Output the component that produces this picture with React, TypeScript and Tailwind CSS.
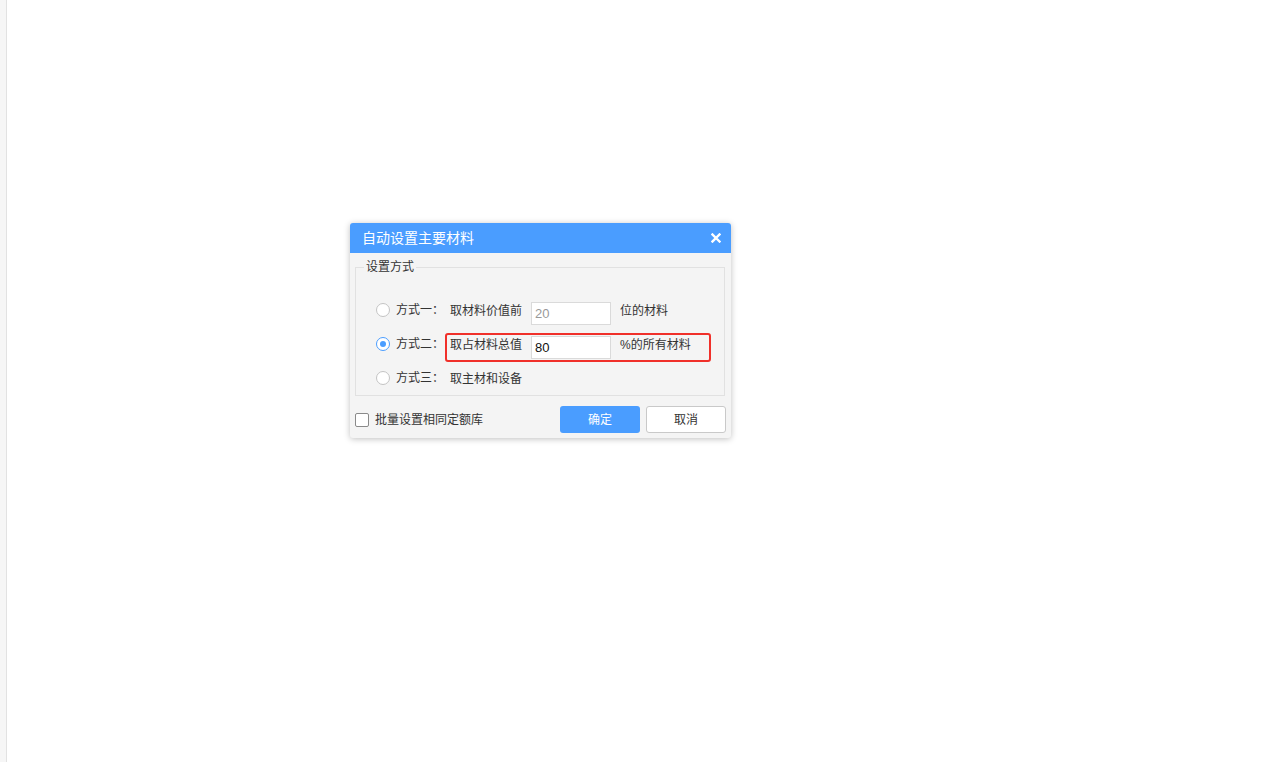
import { useState } from 'react';

const font = { fontFamily: '"Liberation Sans", "Noto Sans CJK SC", sans-serif' };

interface RowProps {
  label: string;
  checked: boolean;
  highlight?: boolean;
  onSelect: () => void;
  children: React.ReactNode;
}

const Radio = ({ checked }: { checked: boolean }) => (
  <span
    className={`flex h-[14px] w-[14px] shrink-0 items-center justify-center rounded-full border bg-white ${
      checked ? 'border-[#4a9dff]' : 'border-[#c4c4c4]'
    }`}
  >
    {checked && <span className="h-[6px] w-[6px] rounded-full bg-[#4a9dff]" />}
  </span>
);

const OptionRow = ({ label, checked, highlight, onSelect, children }: RowProps) => (
  <div className="flex h-[34px] items-center pl-[20px]">
    <button type="button" onClick={onSelect} className="flex items-center">
      <Radio checked={checked} />
      <span className="ml-[6px] w-[49px] text-left text-[12px] leading-[16px] text-[#333]">{label}</span>
    </button>
    <div
      className={`mt-[7px] flex h-[29px] w-[266px] items-center rounded-[3px] border-2 pl-[3px] ${
        highlight ? 'border-[#f0302a]' : 'border-transparent'
      }`}
    >
      {children}
    </div>
  </div>
);

const Text = ({ children, className }: { children: React.ReactNode; className?: string }) => (
  <span className={`mb-[6px] text-[12px] leading-[16px] text-[#333] ${className ?? ''}`}>{children}</span>
);

const App = () => {
  const [mode, setMode] = useState(2);
  const [topN, setTopN] = useState('20');
  const [percent, setPercent] = useState('80');
  const [batch, setBatch] = useState(false);

  return (
    <div className="flex h-[762px] w-full bg-white" style={font}>
      <div className="h-full w-[7px] shrink-0 border-r border-[#e2e2e2] bg-[#f6f6f6]" />
      <div className="flex-1 pl-[343px] pt-[223px]">
        <div className="w-[381px] overflow-hidden rounded-[3px] bg-[#f4f4f4] shadow-[0_1px_6px_rgba(0,0,0,0.25)]">
          <div className="flex h-[30px] items-center justify-between bg-[#4a9dff] pl-[12px] pr-[10px]">
            <span className="text-[14px] leading-[18px] text-white">自动设置主要材料</span>
            <button type="button" className="flex h-[10px] w-[10px] items-center justify-center">
              <svg width="10" height="10" viewBox="0 0 10 10">
                <path d="M1.5 1.5 L8.5 8.5 M8.5 1.5 L1.5 8.5" stroke="white" strokeWidth="2.4" strokeLinecap="square" />
              </svg>
            </button>
          </div>

          <div className="px-[5px] pb-[5px] pt-[6px]">
            <fieldset className="w-[370px] border border-[#e1e1e1] pb-0 pt-[18px]">
              <legend className="ml-[8px] px-[2px] text-[12px] leading-[16px] text-[#333]">设置方式</legend>
              <OptionRow label="方式一：" checked={mode === 1} onSelect={() => setMode(1)}>
                <Text className="w-[81px]">取材料价值前</Text>
                <input
                  value={topN}
                  onChange={e => setTopN(e.target.value)}
                  className="h-[23px] w-[80px] border border-[#dadada] bg-white pl-[3px] text-[13px] text-[#999] outline-none"
                />
                <Text className="ml-[9px]">位的材料</Text>
              </OptionRow>
              <OptionRow label="方式二：" checked={mode === 2} highlight onSelect={() => setMode(2)}>
                <Text className="w-[81px]">取占材料总值</Text>
                <input
                  value={percent}
                  onChange={e => setPercent(e.target.value)}
                  className="h-[23px] w-[80px] border border-[#dadada] bg-white pl-[3px] text-[13px] text-[#111] outline-none"
                />
                <Text className="ml-[9px]">%的所有材料</Text>
              </OptionRow>
              <OptionRow label="方式三：" checked={mode === 3} onSelect={() => setMode(3)}>
                <Text>取主材和设备</Text>
              </OptionRow>
            </fieldset>

            <div className="mt-[10px] flex items-center justify-between">
              <button type="button" onClick={() => setBatch(!batch)} className="flex items-center">
                <span className="flex h-[14px] w-[14px] items-center justify-center rounded-[2px] border border-[#8a8a8a] bg-white">
                  {batch && (
                    <svg width="10" height="10" viewBox="0 0 10 10">
                      <path d="M1.5 5 L4 7.5 L8.5 2.5" stroke="#333" strokeWidth="1.5" fill="none" />
                    </svg>
                  )}
                </span>
                <span className="ml-[6px] text-[12px] leading-[16px] text-[#333]">批量设置相同定额库</span>
              </button>
              <div className="flex gap-[6px]">
                <button
                  type="button"
                  className="h-[27px] w-[80px] rounded-[3px] bg-[#4a9dff] text-[12px] text-white"
                >
                  确定
                </button>
                <button
                  type="button"
                  className="h-[27px] w-[80px] rounded-[3px] border border-[#c9c9c9] bg-white text-[12px] text-[#333]"
                >
                  取消
                </button>
              </div>
            </div>
          </div>
        </div>
      </div>
    </div>
  );
};

export default App;
